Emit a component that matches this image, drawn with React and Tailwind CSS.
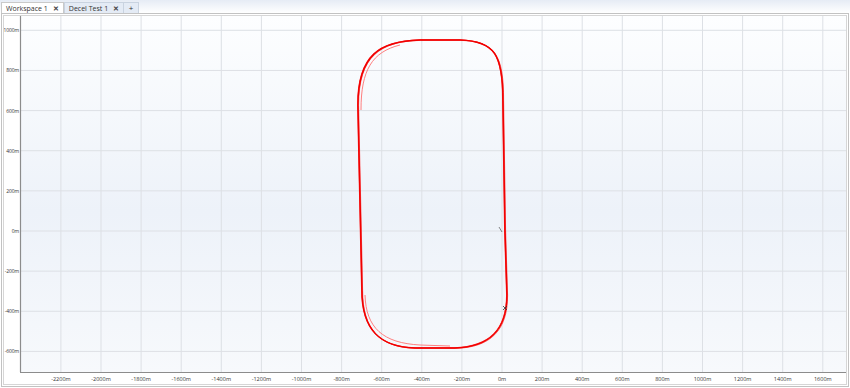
import React from 'react'

const xTicks = [-2200, -2000, -1800, -1600, -1400, -1200, -1000, -800, -600, -400, -200, 0, 200, 400, 600, 800, 1000, 1200, 1400, 1600]
const yTicks = [1000, 800, 600, 400, 200, 0, -200, -400, -600]

// metres -> page pixels
const px = (m) => 502 + m * 0.2005
const py = (m) => 231 - m * 0.2007

function Tab({ label, active }) {
  return (
    <div
      className={
        'h-[11px] flex items-center gap-[5px] px-[4px] border border-b-0 text-[7px] leading-none ' +
        (active ? 'bg-white border-[#c9c9c9] text-[#333]' : 'bg-[#e4ebf5] border-[#c9d3e0] text-[#333]')
      }
    >
      <span>{label}</span>
      <span className="text-[7px] font-bold text-[#444]">✕</span>
    </div>
  )
}

function Track() {
  const lap = (dx, dy) =>
    `M ${505 + dx} ${230 + dy} L ${503 + dx} ${100 + dy} C ${503 + dx} ${55 + dy} ${495 + dx} ${41 + dy} ${460 + dx} ${40 + dy} ` +
    `L ${420 + dx} ${40 + dy} C ${380 + dx} ${41 + dy} ${358 + dx} ${55 + dy} ${358 + dx} ${105 + dy} ` +
    `L ${362 + dx} ${290 + dy} C ${362 + dx} ${330 + dy} ${380 + dx} ${347 + dy} ${415 + dx} ${348 + dy} ` +
    `L ${455 + dx} ${348 + dy} C ${490 + dx} ${347 + dy} ${507 + dx} ${330 + dy} ${507 + dx} ${295 + dy} L ${505 + dx} ${230 + dy}`

  return (
    <g fill="none" strokeLinejoin="round">
      <path d="M 365 295 C 366 328 383 343 420 345 L 450 346" stroke="#ff8080" strokeWidth="1" />
      <path d="M 361 110 C 361 70 372 52 400 45" stroke="#ff7070" strokeWidth="0.9" />
      <path d={lap(0.6, 0.4)} stroke="#ff2020" strokeWidth="1" opacity="0.7" />
      <path d={lap(-0.4, -0.3)} stroke="#ff0000" strokeWidth="1.1" opacity="0.85" />
      <path d={lap(0, 0)} stroke="#f00000" strokeWidth="1.4" />
      <path d="M 499 227 L 502 232" stroke="#666" strokeWidth="0.8" />
      <path d="M 503 306 L 507 310 M 507 306 L 503 310" stroke="#333" strokeWidth="0.8" />
    </g>
  )
}

function Chart() {
  return (
    <svg className="block w-full h-full" viewBox="4 16 842 368" preserveAspectRatio="none">
      <defs>
        <linearGradient id="plotbg" x1="0" y1="0" x2="0" y2="1">
          <stop offset="0%" stopColor="#fdfeff" />
          <stop offset="55%" stopColor="#edf2f9" />
          <stop offset="100%" stopColor="#f7f9fc" />
        </linearGradient>
      </defs>
      <rect x="20" y="16" width="826" height="356" fill="url(#plotbg)" />

      <g stroke="#dde0e5" strokeWidth="1">
        {xTicks.map((t) => (
          <line key={t} x1={px(t)} y1="16" x2={px(t)} y2="372" />
        ))}
        {yTicks.map((t) => (
          <line key={t} x1="20" y1={py(t)} x2="846" y2={py(t)} />
        ))}
      </g>

      <Track />

      <line x1="20.5" y1="16" x2="20.5" y2="372" stroke="#8c8c8c" strokeWidth="1.2" />
      <line x1="20" y1="372.5" x2="846" y2="372.5" stroke="#8c8c8c" strokeWidth="1.2" />

      <g fontFamily="'Open Sans', 'Noto Sans', sans-serif" fontSize="5" fill="#333">
        {yTicks.map((t) => (
          <text key={t} x="19" y={py(t) + 2} textAnchor="end" letterSpacing="-0.1">
            {t}m
          </text>
        ))}
        {xTicks.map((t) => (
          <text key={t} x={px(t)} y="381" textAnchor="middle" fontSize="5.5">
            {t}m
          </text>
        ))}
      </g>
    </svg>
  )
}

export default function App() {
  return (
    <div className="w-[850px] h-[388px] bg-white flex flex-col font-['Open_Sans','Noto_Sans',sans-serif]">
      <div className="h-[13px] flex items-end pl-[1px] bg-gradient-to-b from-[#e6ecf5] to-white">
        <Tab label="Workspace 1" active />
        <Tab label="Decel Test 1" />
        <div className="h-[11px] w-[15px] flex items-center justify-center border border-b-0 border-l-0 border-[#c9d3e0] bg-[#e4ebf5] text-[8px] leading-none text-[#333]">
          +
        </div>
      </div>
      <div className="flex-1 mx-[1px] mb-[1px] border border-[#c2c2c2] p-[1px]">
        <div className="w-full h-full border border-[#d6d6d6] bg-white">
          <Chart />
        </div>
      </div>
    </div>
  )
}
